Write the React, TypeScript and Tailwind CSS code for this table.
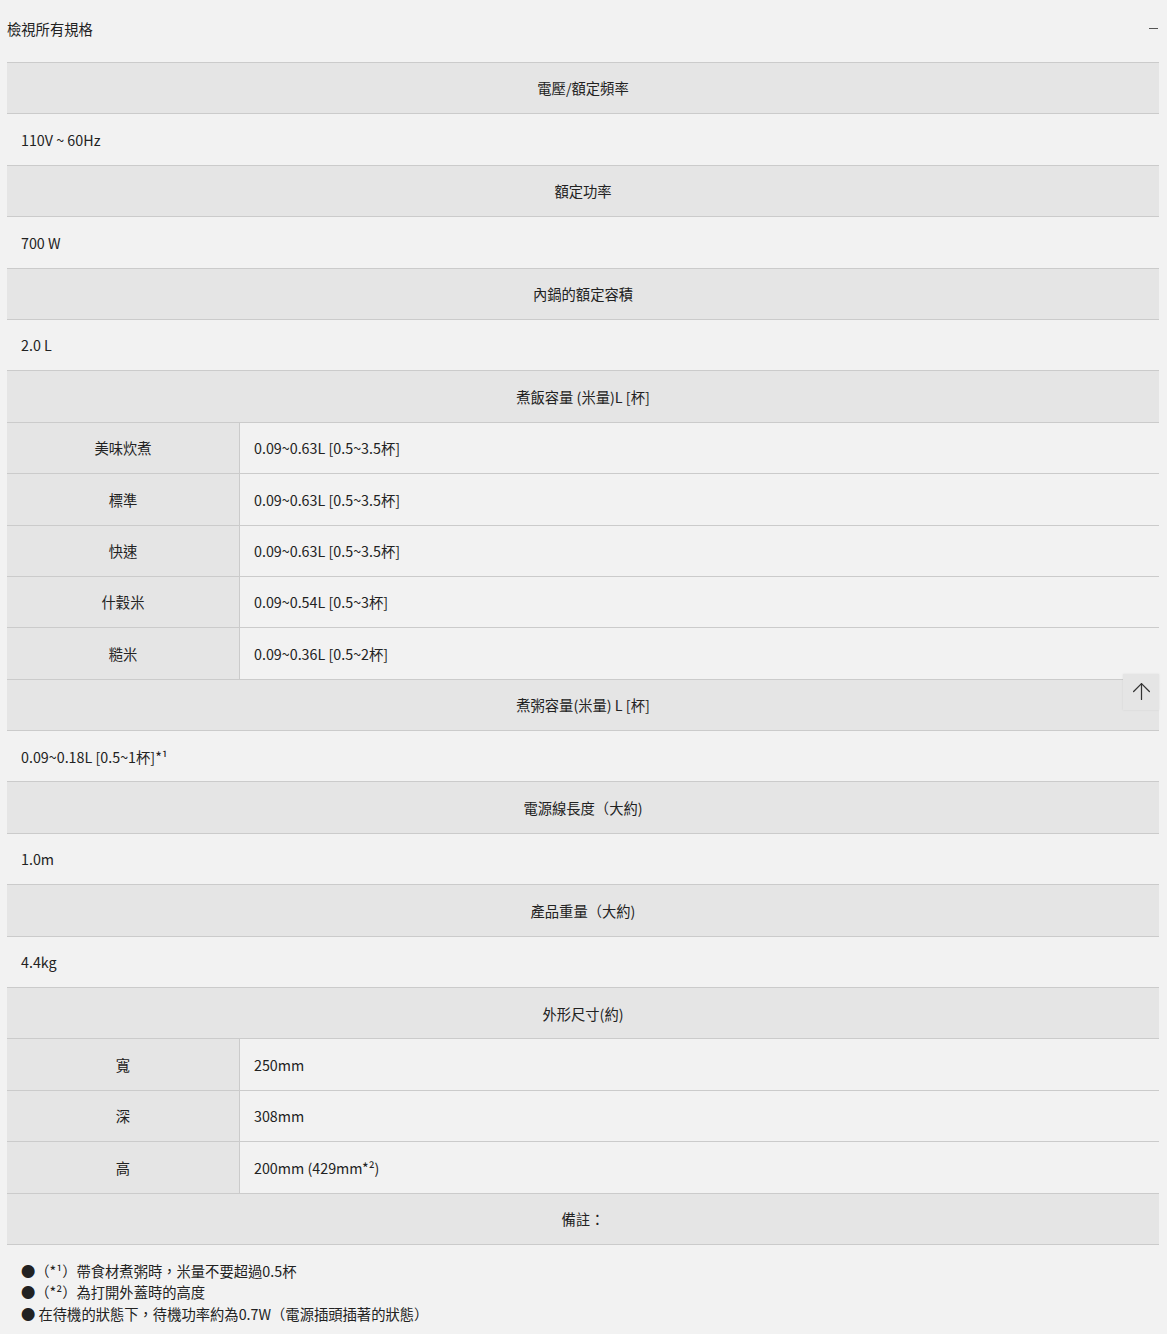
import { ArrowUp } from 'lucide-react'

type Fila =
  | { tipo: 'titulo'; texto: React.ReactNode }
  | { tipo: 'valor'; texto: React.ReactNode }
  | { tipo: 'par'; etiqueta: string; texto: React.ReactNode }

const filas: Fila[] = [
  { tipo: 'titulo', texto: '電壓/額定頻率' },
  { tipo: 'valor', texto: '110V ~ 60Hz' },
  { tipo: 'titulo', texto: '額定功率' },
  { tipo: 'valor', texto: '700 W' },
  { tipo: 'titulo', texto: '內鍋的額定容積' },
  { tipo: 'valor', texto: '2.0 L' },
  { tipo: 'titulo', texto: '煮飯容量 (米量)L [杯]' },
  { tipo: 'par', etiqueta: '美味炊煮', texto: '0.09~0.63L [0.5~3.5杯]' },
  { tipo: 'par', etiqueta: '標準', texto: '0.09~0.63L [0.5~3.5杯]' },
  { tipo: 'par', etiqueta: '快速', texto: '0.09~0.63L [0.5~3.5杯]' },
  { tipo: 'par', etiqueta: '什穀米', texto: '0.09~0.54L [0.5~3杯]' },
  { tipo: 'par', etiqueta: '糙米', texto: '0.09~0.36L [0.5~2杯]' },
  { tipo: 'titulo', texto: '煮粥容量(米量) L [杯]' },
  { tipo: 'valor', texto: '0.09~0.18L [0.5~1杯]*¹' },
  { tipo: 'titulo', texto: '電源線長度（大約)' },
  { tipo: 'valor', texto: '1.0m' },
  { tipo: 'titulo', texto: '產品重量（大約)' },
  { tipo: 'valor', texto: '4.4kg' },
  { tipo: 'titulo', texto: '外形尺寸(約)' },
  { tipo: 'par', etiqueta: '寬', texto: '250mm' },
  { tipo: 'par', etiqueta: '深', texto: '308mm' },
  { tipo: 'par', etiqueta: '高', texto: '200mm (429mm*²)' },
  { tipo: 'titulo', texto: '備註：' },
]

export default function App() {
  return (
    <div
      className="relative min-h-[1334px] bg-[#f2f2f2] px-[7px] pr-[8px] text-[14.3px] text-[#222]"
      style={{ fontFamily: '"Noto Sans CJK TC", "Noto Sans", sans-serif' }}
    >
      <div className="flex h-[62px] items-center justify-between pb-[5px]">
        <span>檢視所有規格</span>
        <span className="mr-[1px] block h-[1px] w-[9px] bg-[#555]" />
      </div>

      <div className="border-t border-[#cbcbcb]">
        {filas.map((fila, i) => {
          if (fila.tipo === 'titulo')
            return (
              <div key={i} className="flex h-[51.4px] items-center justify-center border-b border-[#cbcbcb] bg-[#e5e5e5]">
                {fila.texto}
              </div>
            )
          if (fila.tipo === 'valor')
            return (
              <div key={i} className="flex h-[51.4px] items-center border-b border-[#cbcbcb] px-[14px]">
                <span>{fila.texto}</span>
              </div>
            )
          return (
            <div key={i} className="flex h-[51.4px] border-b border-[#cbcbcb]">
              <div className="flex w-[233px] items-center justify-center border-r border-[#cbcbcb] bg-[#e5e5e5]">
                {fila.etiqueta}
              </div>
              <div className="flex flex-1 items-center px-[14px]">
                <span>{fila.texto}</span>
              </div>
            </div>
          )
        })}
      </div>

      <ul className="px-[14px] pt-[15px] leading-[21.5px]">
        <li>●（*¹）帶食材煮粥時，米量不要超過0.5杯</li>
        <li>●（*²）為打開外蓋時的高度</li>
        <li>● 在待機的狀態下，待機功率約為0.7W（電源插頭插著的狀態）</li>
      </ul>

      <button className="absolute left-[1123px] top-[674px] flex h-[36px] w-[36px] items-start justify-center bg-[#e5e5e5] pt-[4px] text-[#333] shadow-[0_0_2px_rgba(0,0,0,0.08)]">
        <ArrowUp size={27} strokeWidth={1.1} />
      </button>
    </div>
  )
}
